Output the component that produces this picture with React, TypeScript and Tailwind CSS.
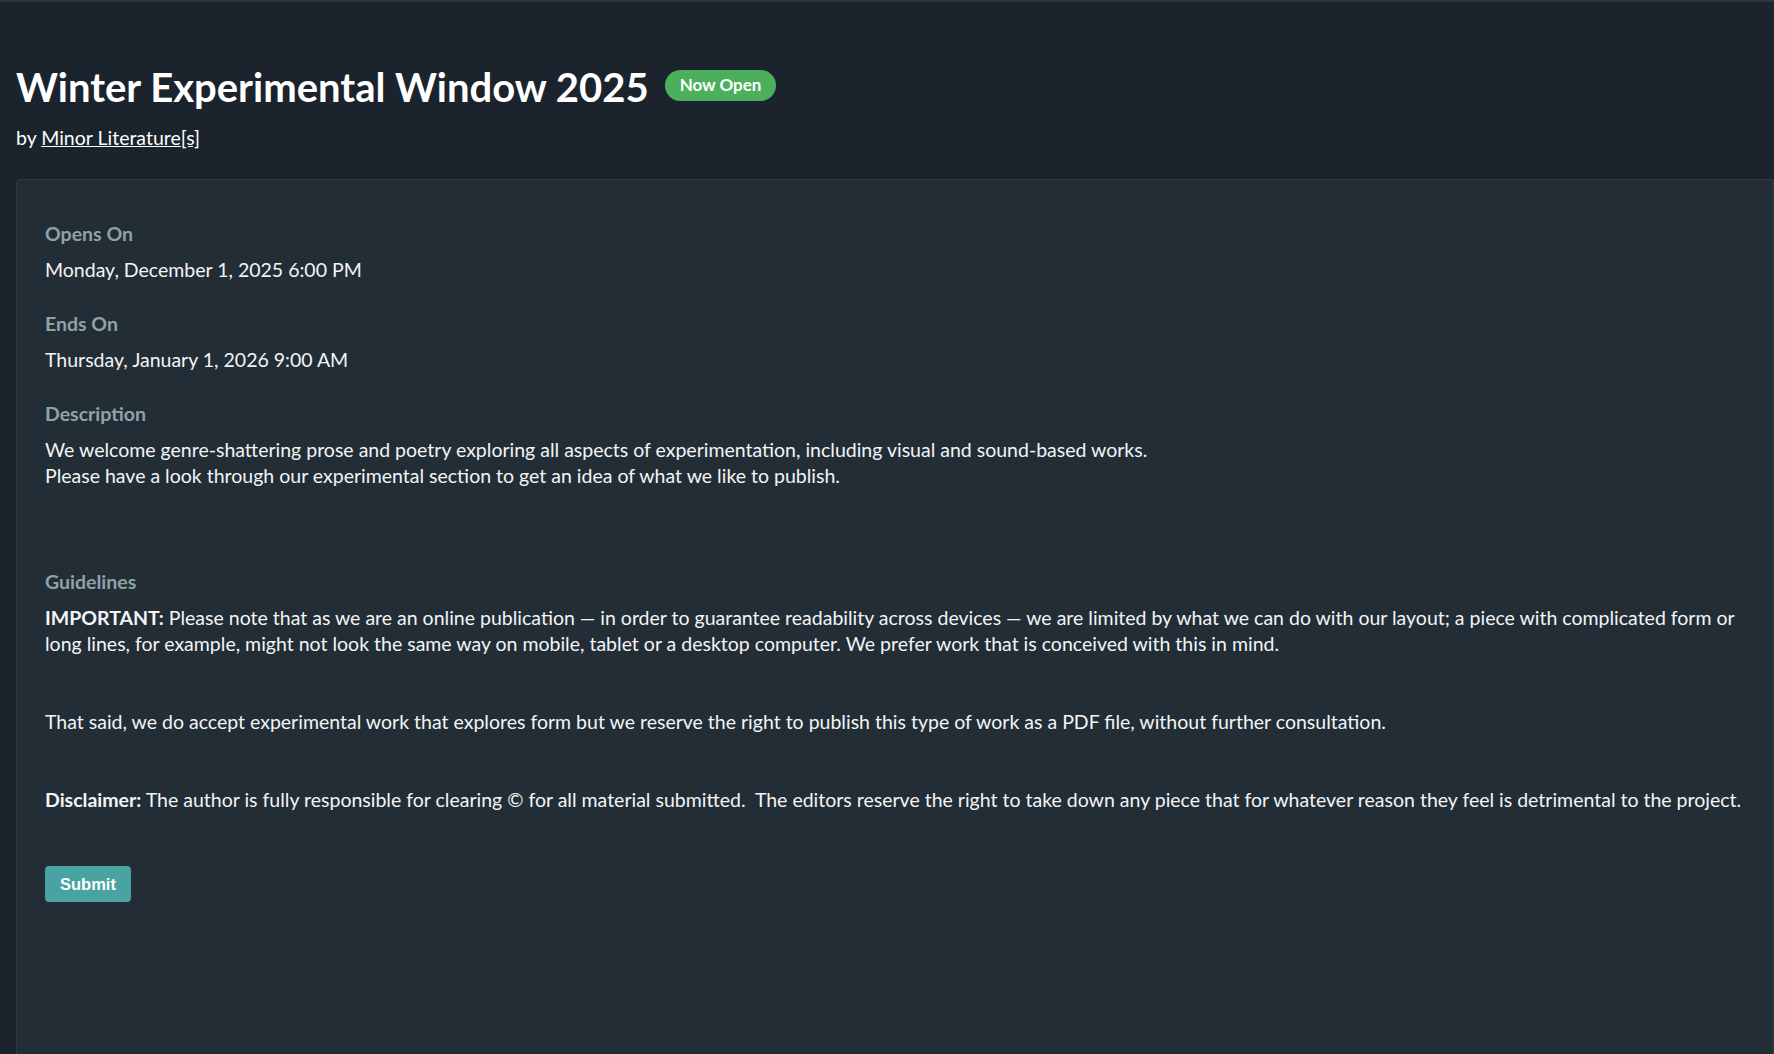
import React from 'react';

const font = { fontFamily: 'Lato, "Open Sans", sans-serif' };

const Section: React.FC<{ label: string; children: React.ReactNode }> = ({ label, children }) => (
  <div className="mb-7">
    <div className="text-[19.5px] leading-[26px] font-bold text-[#8ea3a8] mb-[10px]">{label}</div>
    <div className="text-[19.5px] leading-[26px] text-[#f2f4f5]">{children}</div>
  </div>
);

const App: React.FC = () => {
  return (
    <div className="min-h-screen bg-[#1b232c] border-t-2 border-[#2d3640] overflow-hidden" style={font}>
      <header className="pl-4 pt-[63px]">
        <div className="flex items-center gap-4">
          <h1 className="text-[40px] leading-[44px] font-bold text-white">Winter Experimental Window 2025</h1>
          <span className="rounded-full bg-[#4caf5c] px-[15px] h-[31px] flex items-center text-[17px] font-bold text-white -mt-1">
            Now Open
          </span>
        </div>
        <p className="mt-4 text-[19.5px] leading-[26px] text-white">
          by <a href="#" className="underline">Minor Literature[s]</a>
        </p>
      </header>

      <main className="pl-4 mt-7">
        <div className="bg-[#232d36] border border-[#2f3a44] rounded-tl min-h-[880px] px-7 pt-[41px] pb-16">
          <Section label="Opens On">Monday, December 1, 2025 6:00 PM</Section>
          <Section label="Ends On">Thursday, January 1, 2026 9:00 AM</Section>
          <Section label="Description">
            <p>We welcome genre-shattering prose and poetry exploring all aspects of experimentation, including visual and sound-based works.</p>
            <p>Please have a look through our experimental section to get an idea of what we like to publish.</p>
            <p className="h-[52px]" />
          </Section>
          <Section label="Guidelines">
            <p>
              <strong>IMPORTANT:</strong> Please note that as we are an online publication — in order to guarantee readability across devices — we are limited by what we can do with our layout; a piece with complicated form or long lines, for example, might not look the same way on mobile, tablet or a desktop computer. We prefer work that is conceived with this in mind.
            </p>
            <p className="mt-[52px]">
              That said, we do accept experimental work that explores form but we reserve the right to publish this type of work as a PDF file, without further consultation.
            </p>
            <p className="mt-[52px]">
              <strong>Disclaimer:</strong> The author is fully responsible for clearing © for all material submitted.&nbsp; The editors reserve the right to take down any piece that for whatever reason they feel is detrimental to the project.
            </p>
          </Section>
          <button
            className="mt-[25px] h-[36px] px-[15px] rounded bg-[#48a3a3] text-white text-[16.5px] font-bold"
            style={{ fontFamily: '"Liberation Sans", Arial, sans-serif' }}
          >
            Submit
          </button>
        </div>
      </main>
    </div>
  );
};

export default App;
